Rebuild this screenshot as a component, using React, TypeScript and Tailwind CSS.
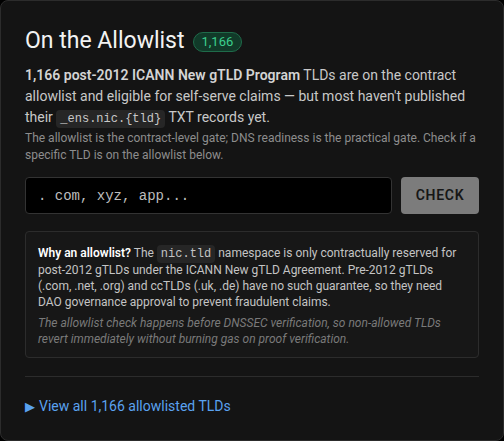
import { useState } from 'react'

const mono = 'font-["Liberation_Mono",monospace]'

export default function App() {
  const [tld, setTld] = useState('')

  return (
    <div className="h-[441px] w-[504px] bg-black font-[Roboto,sans-serif]">
      <div className="h-full rounded-lg border border-[#2c2c2c] bg-[#141414] px-6 pt-6">
        {/* Header */}
        <div className="flex items-center gap-2">
          <h2 className="text-[23px] leading-8 font-normal text-[#f2f2f2]">On the Allowlist</h2>
          <span className="mt-0.5 rounded-full border border-[#1f6b4a] bg-[#113a29] px-2 text-[13px] leading-[18px] text-[#3ccf8e]">
            1,166
          </span>
        </div>

        <p className="mt-2 text-[14px] leading-[21px] text-[#c8c8c8]">
          <strong className="font-semibold text-[#d4d4d4]">1,166 post-2012 ICANN New gTLD Program</strong> TLDs are on the
          contract allowlist and eligible for self-serve claims — but most haven't published their{' '}
          <code className={`${mono} rounded bg-[#262626] px-1 py-0.5 text-[12px] text-[#c8c8c8]`}>
            _ens.nic.{'{tld}'}
          </code>{' '}
          TXT records yet.
        </p>
        <p className="text-[12px] leading-[17px] text-[#8d8d8d]">
          The allowlist is the contract-level gate; DNS readiness is the practical gate. Check if a specific TLD is on
          the allowlist below.
        </p>

        {/* Check form */}
        <div className="mt-[13px] flex gap-[9px]">
          <input
            value={tld}
            onChange={(e) => setTld(e.target.value)}
            placeholder=". com, xyz, app..."
            className={`${mono} h-[37px] flex-1 rounded border border-[#333] bg-black px-3 text-[14px] text-[#ddd] placeholder:text-[#bdbdbd] outline-none`}
          />
          <button className="h-[37px] w-[78px] rounded bg-[#7c7c7c] text-[14px] font-semibold tracking-[0.05em] text-[#161616]">
            CHECK
          </button>
        </div>

        {/* Why callout */}
        <div className="mt-[17px] rounded border border-[#2c2c2c] bg-[#171717] px-3 pt-[13px] pb-[10px]">
          <p className="text-[12px] leading-4 text-[#c4c4c4]">
            <strong className="font-semibold text-white">Why an allowlist?</strong> The{' '}
            <code className={`${mono} rounded bg-[#262626] px-1 py-0.5 text-[12px]`}>nic.tld</code> namespace is only
            contractually reserved for post-2012 gTLDs under the ICANN New gTLD Agreement. Pre-2012 gTLDs (.com, .net,
            .org) and ccTLDs (.uk, .de) have no such guarantee, so they need DAO governance approval to prevent
            fraudulent claims.
          </p>
          <p className="mt-[5px] text-[12px] leading-4 italic text-[#7a7a7a]">
            The allowlist check happens before DNSSEC verification, so non-allowed TLDs revert immediately without
            burning gas on proof verification.
          </p>
        </div>

        <div className="mt-[18px] border-t border-[#2c2c2c]" />

        <button className="mt-[19px] flex items-center gap-1 text-[14px] text-[#5aa2f0]">
          <span className="text-[13px]">▶</span>
          View all 1,166 allowlisted TLDs
        </button>
      </div>
    </div>
  )
}
